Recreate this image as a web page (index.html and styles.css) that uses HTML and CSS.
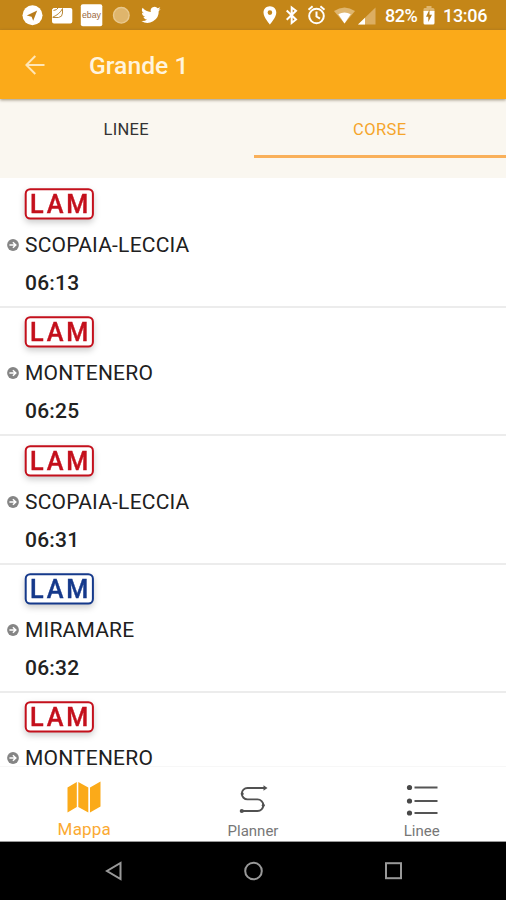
FILE: index.html
```html
<!DOCTYPE html>
<html lang="it">
<head>
<meta charset="utf-8">
<title>Grande 1</title>
<link rel="stylesheet" href="styles.css">
</head>
<body>
<svg class="defs" aria-hidden="true">
  <symbol id="lam" viewBox="0 0 70 32">
    <rect x="1.7" y="1.2" width="67.2" height="29.4" rx="4.5" fill="#fff" stroke="currentColor" stroke-width="2"/>
    <text class="lam-text" transform="scale(.97 1)" x="6.200" y="25.100" textLength="60" lengthAdjust="spacing">LAM</text>
  </symbol>
  <symbol id="arrow" viewBox="0 0 12 12">
    <circle cx="6" cy="6" r="5.9" fill="#858585"/>
    <path d="M2.4 6H8.5M5.9 3.2L8.8 6L5.9 8.8" fill="none" stroke="#fff" stroke-width="1.5"/>
  </symbol>
</svg>
<div class="screen">
  <header class="status">
    <svg class="notifications" width="150" height="30" viewBox="0 0 150 30">
      <circle cx="12.500" cy="15.300" r="10" fill="#fff"/>
      <path d="M6.800 15.400L17.200 10.600L13.200 20.800L11.600 16.800Z" fill="#b87c1b"/>
      <path d="M33.500 8H50.500a1.800 1.800 0 0 1 1.800 1.800V21.500a2 2 0 0 1-2 2H34a2 2 0 0 1-2-2V9.500Z" fill="#fff"/>
      <path d="M32.500 17.300Q40 14 42.500 8.500V13Q42.500 17 38.500 17.500H33M33.500 10.500Q37 10 38 8" fill="none" stroke="#b98939" stroke-width="1"/>
      <rect x="60.800" y="4.300" width="21.500" height="22" rx="2" fill="#fff"/>
      <text class="ebay" x="62" y="17.800" textLength="19" lengthAdjust="spacingAndGlyphs">ebay</text>
      <circle cx="101.300" cy="15.300" r="7.800" fill="#dfb56c" stroke="#e8c88f" stroke-width="1.400"/>
      <path transform="translate(120.500 4.600) scale(.88)" fill="#fff" d="M23 4.900a9 9 0 0 1-2.600.7 4.500 4.500 0 0 0 2-2.500 9 9 0 0 1-2.900 1.100 4.500 4.500 0 0 0-7.800 4.100A12.900 12.900 0 0 1 2.400 3.600a4.500 4.500 0 0 0 1.400 6.100 4.500 4.500 0 0 1-2.100-.6 4.500 4.500 0 0 0 3.700 4.500 4.500 4.500 0 0 1-2.100.1 4.500 4.500 0 0 0 4.300 3.200A9.100 9.100 0 0 1 1 18.700 12.900 12.900 0 0 0 20.700 7.200 9.200 9.200 0 0 0 23 4.900Z"/>
    </svg>
    <div class="system">
      <svg width="116" height="30" viewBox="0 0 116 30">
        <path fill="#fff" fill-rule="evenodd" d="M6.900 6.200C3.200 6.200.5 9 .5 12.500C.5 17.300 6.900 24.500 6.900 24.500S13.300 17.300 13.300 12.500C13.300 9 10.600 6.200 6.900 6.200ZM6.900 10.300a2.300 2.300 0 1 1 0 4.600a2.300 2.300 0 0 1 0-4.600Z"/>
        <path fill="none" stroke="#fff" stroke-width="2" d="M23.700 10.500L33 19.500L28.700 23V7.500L33 10.800L23.700 19.700"/>
        <g fill="none" stroke="#fff" stroke-width="2"><circle cx="53.500" cy="16" r="7.300"/><path d="M45.500 9.700L49.600 6.300M57.400 6.300L61.500 9.700M53.500 11.500V16.500L57 18.700"/></g>
        <path d="M71 11Q81.500 3.800 92 11L81.500 23.500Z" fill="#dfb66f"/>
        <path d="M75.300 14.300Q81.500 10.800 87.700 14.300L81.500 23.500Z" fill="#fff"/>
        <path d="M112.500 7.500V24.500H95Z" fill="#dcae62"/>
        <path d="M102 17.700V24.500H95Z" fill="#fff"/>
      </svg>
      <span class="percent">82%</span>
      <svg width="12" height="30" viewBox="0 0 12 30">
        <path d="M1.500 8H3.500V6H8.500V8H10a1.500 1.500 0 0 1 1.500 1.500V11.500H.5V9.500A1.500 1.500 0 0 1 1.500 8Z" fill="#dfb66f"/>
        <path d="M.5 11H11.500V23a1.500 1.500 0 0 1-1.500 1.500H2A1.500 1.500 0 0 1 .5 23Z" fill="#fff"/>
        <path d="M6.500 9.500L3 16.700H5.300V22L9 14.800H6.500Z" fill="#b77d1b"/>
      </svg>
      <span class="clock">13:06</span>
    </div>
  </header>
  <div class="appbar">
    <svg width="20" height="20" viewBox="0 0 20 20"><path d="M19.500 10H2M10.300 1L1.300 10L10.300 19" fill="none" stroke="#ffe6b5" stroke-width="2"/></svg>
    <h1>Grande 1</h1>
  </div>
  <nav class="tabs">
    <div class="tab"><span class="linee">LINEE</span></div>
    <div class="tab active"><span class="corse">CORSE</span></div>
  </nav>
  <main class="list">
    <section class="run"><svg class="logo red"><use href="#lam"/></svg><div class="dest"><svg class="arrow"><use href="#arrow"/></svg><span>SCOPAIA-LECCIA</span></div><time>06:13</time></section>
    <section class="run"><svg class="logo red"><use href="#lam"/></svg><div class="dest"><svg class="arrow"><use href="#arrow"/></svg><span>MONTENERO</span></div><time>06:25</time></section>
    <section class="run"><svg class="logo red"><use href="#lam"/></svg><div class="dest"><svg class="arrow"><use href="#arrow"/></svg><span>SCOPAIA-LECCIA</span></div><time>06:31</time></section>
    <section class="run"><svg class="logo blue"><use href="#lam"/></svg><div class="dest"><svg class="arrow"><use href="#arrow"/></svg><span>MIRAMARE</span></div><time>06:32</time></section>
    <section class="run"><svg class="logo red"><use href="#lam"/></svg><div class="dest"><svg class="arrow"><use href="#arrow"/></svg><span>MONTENERO</span></div></section>
  </main>
  <nav class="bottom">
    <div class="item map">
      <svg width="36" height="36" viewBox="0 0 36 36"><path fill="#fbaa19" d="M1.500 7.500L10.800 2V27L1.500 32.500ZM12.300 2L22.300 7.500V32.500L12.300 27ZM24 7.500L34.500 1.500V26.500L24 32.500Z"/></svg>
      <span>Mappa</span>
    </div>
    <div class="item">
      <svg width="30" height="36" viewBox="0 0 30 36"><g fill="none" stroke="#515151" stroke-width="1.900"><path d="M28 8H9.500A5.700 5.700 0 0 0 9.500 19.400H19.500A5.800 5.800 0 0 1 19.500 31H3"/></g><path d="M25.500 5.200L29.500 8L25.500 10.800Z" fill="#515151"/><circle cx="3.800" cy="31" r="2.100" fill="#515151"/><circle cx="4.200" cy="13.700" r="1.500" fill="#515151"/><circle cx="25.300" cy="25.200" r="1.500" fill="#515151"/></svg>
      <span>Planner</span>
    </div>
    <div class="item">
      <svg width="34" height="36" viewBox="0 0 34 36"><g fill="#484848"><circle cx="4.500" cy="7.500" r="2.600"/><circle cx="4.500" cy="21" r="2.600"/><circle cx="4.500" cy="33" r="2.600"/></g><path d="M9.500 7.500H32.500M9.500 21H32.500M9.500 33H32.500" stroke="#555" stroke-width="2.200"/></svg>
      <span>Linee</span>
    </div>
  </nav>
  <footer class="system-nav">
    <svg width="20" height="22" viewBox="0 0 20 22"><path d="M17.500 3V19L4 11Z"/></svg>
    <svg width="20" height="22" viewBox="0 0 20 22"><circle cx="10.500" cy="11" r="8.300"/></svg>
    <svg width="20" height="22" viewBox="0 0 20 22"><rect x="3" y="3.200" width="15" height="15"/></svg>
  </footer>
</div>
</body>
</html>
```
FILE: styles.css
```css
* { box-sizing: border-box; }
body { margin: 0; font-family: Roboto, "Liberation Sans", sans-serif; background: #fff; }
svg { display: block; flex: none; }
.defs { position: absolute; width: 0; height: 0; }
.screen { width: 506px; height: 900px; display: flex; flex-direction: column; overflow: hidden; }

.status { height: 30px; flex: none; background: #c48618; display: flex; justify-content: space-between; padding: 0 18px 0 20px; }
.ebay { font: 9px "Liberation Sans", sans-serif; fill: #9c6a3f; }
.system { display: flex; color: #fff; font-weight: 500; font-size: 18px; line-height: 32px; }
.percent { width: 34px; margin: 0 4px 0 6px; letter-spacing: -.5px; }
.clock { width: 45px; margin-left: 8px; letter-spacing: -.3px; }

.appbar { height: 69px; flex: none; background: #fbaa19; display: flex; align-items: center; padding: 0 25px; gap: 44px; z-index: 1; box-shadow: 0 1px 3px rgba(90, 75, 50, .6); }
.appbar h1 { margin: 2px 0 0; font-size: 24.7px; font-weight: 500; line-height: 30px; color: #fff4de; }

.tabs { height: 79px; flex: none; background: #faf7f0; display: flex; }
.tab { flex: 1; height: 59px; padding-top: 19px; text-align: center; font-size: 16.5px; line-height: 24px; color: #333; border-bottom: 3px solid transparent; }
.tab.active { color: #f5a52b; border-color: #f9b05a; margin-left: 1px; }
.linee { letter-spacing: .3px; }
.corse { letter-spacing: .4px; }

.list { flex: 1; min-height: 0; overflow: hidden; }
.run { height: 128.35px; border-bottom: 2px solid #ececec; padding-top: 8.5px; }
.run:first-child { height: 129.85px; padding-top: 10px; }
.logo { width: 70px; height: 32px; margin-left: 24px; filter: drop-shadow(0 3px 3px rgba(0, 0, 0, .2)); }
.lam-text { font: 500 26px Roboto, sans-serif; fill: currentColor; stroke: currentColor; stroke-width: .4px; }
.red { color: #c4101c; }
.blue { color: #15398b; }
.dest { display: flex; align-items: center; height: 22px; margin-top: 14px; padding-left: 7px; font-size: 21px; line-height: 22px; letter-spacing: .2px; color: #202020; }
.arrow { width: 12px; height: 12px; margin-right: 6px; }
.run time { display: block; margin: 13px 0 0 25px; font-size: 21px; line-height: 28px; font-weight: 500; letter-spacing: .2px; color: #222; }

.bottom { height: 76px; flex: none; border-top: 1px solid #f7f7f7; border-bottom: 1px solid #999; background: #fff; display: grid; grid-template-columns: repeat(3, 1fr); }
.item { display: flex; flex-direction: column; align-items: center; padding-top: 13px; font-size: 15px; line-height: 18px; color: #777; }
.item span { margin-top: 6px; }
.item.map { color: #fbaa32; font-size: 17px; letter-spacing: .2px; }
.item.map span { margin-top: 4px; }

.system-nav { height: 58px; flex: none; background: #000; display: flex; justify-content: center; gap: 120px; padding-top: 18px; }
.system-nav svg { fill: none; stroke: #999; stroke-width: 2; }
```
